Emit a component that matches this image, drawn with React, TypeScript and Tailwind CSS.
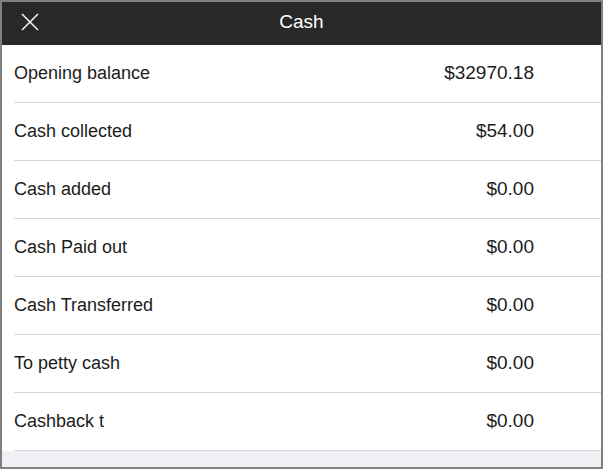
const rows = [
  { label: "Opening balance", value: "$32970.18" },
  { label: "Cash collected", value: "$54.00" },
  { label: "Cash added", value: "$0.00" },
  { label: "Cash Paid out", value: "$0.00" },
  { label: "Cash Transferred", value: "$0.00" },
  { label: "To petty cash", value: "$0.00" },
  { label: "Cashback t", value: "$0.00" },
];

const App = () => {
  return (
    <div
      className="w-[603px] h-[469px] border-2 border-[#808080] bg-[#efeff4] flex flex-col overflow-hidden"
      style={{ fontFamily: '"Liberation Sans", Arial, sans-serif' }}
    >
      <header className="relative h-[43px] shrink-0 bg-[#282828] flex items-center justify-center">
        <button className="absolute left-[19px] top-[11px] text-white">
          <svg width="18" height="18" viewBox="0 0 18 18" fill="none" stroke="#f2f2f2" strokeWidth="1.6">
            <path d="M1 1 L17 17 M17 1 L1 17" />
          </svg>
        </button>
        <h1 className="text-white text-[19px] leading-none -mt-[5px]">Cash</h1>
      </header>

      <main className="bg-white">
        {rows.map((row) => (
          <div key={row.label} className="ml-[12px] h-[58px] border-b border-[#d4d6da] flex items-center justify-between pr-[67px]">
            <span className="text-[18px] text-[#1c1c1c]">{row.label}</span>
            <span className="text-[19px] text-[#1c1c1c]">{row.value}</span>
          </div>
        ))}
      </main>
    </div>
  );
};

export default App;
